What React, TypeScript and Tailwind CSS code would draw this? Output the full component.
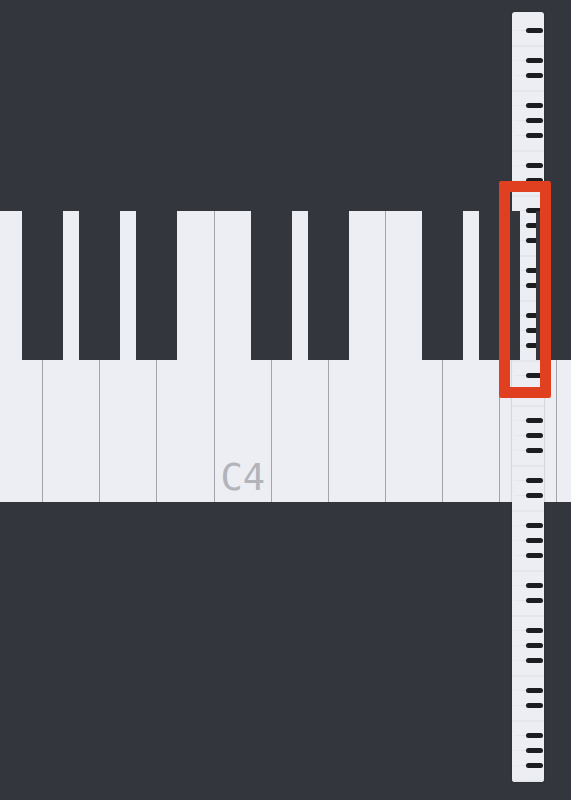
const keys = ["F", "G", "A", "B", "C", "D", "E", "F", "G", "A", "B"];
const withBlack = ["C", "D", "F", "G", "A"];

// 88-key overview strip, A0 at the top
const stripKeys = Array.from({ length: 52 }, (_, i) => "ABCDEFG"[i % 7]);

function MiniKeyboard() {
  return (
    <div className="absolute left-[512px] top-[12px] flex h-[770px] w-[32px] flex-col overflow-hidden rounded-[3px] bg-[#eceef3] pt-[6px] shadow-[0_0_2px_rgba(0,0,0,0.35)]">
      {stripKeys.map((n, i) => (
        <div key={i} className="flex shrink-0 flex-col">
          <div className="h-[10px]" />
          {withBlack.includes(n) ? (
            <div className="flex h-[5px] items-center gap-0 pr-[1px]">
              <div className="h-px flex-1 bg-gradient-to-r from-transparent to-[#dde0e6]" />
              <div className="h-[5px] w-[17px] rounded-full bg-[#1b1d21]" />
            </div>
          ) : (
            <div className="flex h-[5px] items-center">
              <div className="h-[2px] flex-1 bg-[#e3e6eb]" />
            </div>
          )}
        </div>
      ))}
    </div>
  );
}

export default function App() {
  return (
    <div className="relative h-[800px] w-full overflow-hidden bg-[#33363d]">
      <div className="pt-[211px]">
        <div className="flex h-[291px] overflow-hidden">
          <div className="-ml-[14px] flex shrink-0">
            {keys.map((n, i) => (
              <div
                key={i}
                className="relative flex h-[291px] w-[57.125px] shrink-0 items-end border-r border-[#a1a4ab] bg-[#eceef3]"
              >
                {i === 4 && (
                  <span className="pb-[6px] pl-[6px] font-['DejaVu_Sans_Mono',monospace] text-[37px] leading-none text-[#b1b4ba]">
                    C4
                  </span>
                )}
                {withBlack.includes(n) && (
                  <div className="absolute -right-[21px] top-0 z-10 h-[149px] w-[41px] bg-[#33363d]" />
                )}
              </div>
            ))}
          </div>
        </div>
      </div>

      <MiniKeyboard />

      {/* visible range */}
      <div className="absolute left-[499px] top-[181px] z-20 h-[217px] w-[52px] rounded-[2px] border-[11px] border-[#e0401f]" />
    </div>
  );
}
